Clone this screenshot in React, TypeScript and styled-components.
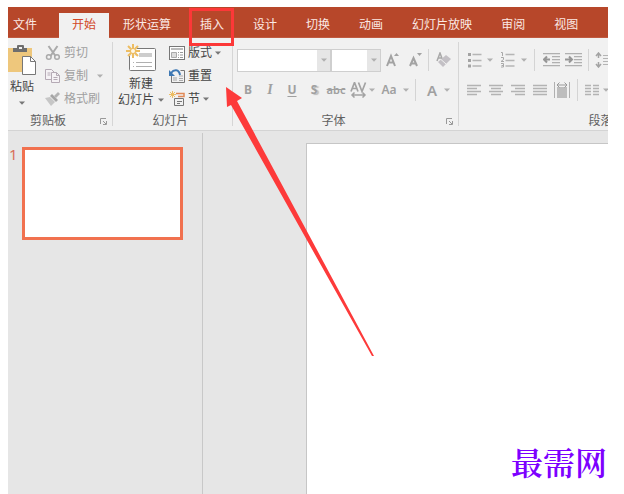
import React from "react";
import styled, { createGlobalStyle, css } from "styled-components";

const GlobalStyle = createGlobalStyle`
  * { box-sizing: border-box; }
  body { margin: 0; background: #fff; }
  body, button, select {
    font-family: "Noto Sans", "Noto Sans CJK SC", sans-serif;
    font-size: 12px;
    line-height: 16px;
  }
  button { border: 0; padding: 0; background: none; color: inherit; cursor: pointer; }
  svg { display: block; flex: none; }
`;

const Page = styled.main`
  min-height: 100vh;
  padding: 7px 16px 0 8px;
  display: flex;
  flex-direction: column;
`;

const AppWindow = styled.div`
  position: relative;
  flex: 1;
  display: flex;
  flex-direction: column;
  overflow: hidden;
  background: #e6e6e6;
`;

const TabBar = styled.nav`
  display: flex;
  align-items: flex-end;
  height: 31px;
  background: #b7472a;
  border-bottom: 1px solid #c05a40;
`;

const Tab = styled.button<{ $kind?: "file" | "active" }>`
  position: relative;
  flex: none;
  height: 24px;
  margin-right: 1px;
  padding: 0 14px;
  color: #fbe9e4;
  white-space: nowrap;
  ${(p) => p.$kind === "file" && css`margin: 0; padding: 0 22px 0 5px;`}
  ${(p) =>
    p.$kind === "active" &&
    css`
      height: 25px;
      margin: 0 0 -1px;
      padding: 0 13px 2px;
      background: #f1f1f1;
      color: #d24726;
    `}
`;

const Highlight = styled.span`
  position: absolute;
  z-index: 2;
  inset: -5px 4px -9px 3px;
  border: 3px solid #fc3838;
  pointer-events: none;
`;

const Ribbon = styled.div`
  display: flex;
  background: #f1f1f1;
  border-bottom: 1px solid #d4d4d4;
`;

const Group = styled.section<{ $width: number }>`
  flex: none;
  width: ${(p) => p.$width}px;
  display: flex;
  flex-direction: column;
  margin: 4px 0;
  border-right: 1px solid #d6d6d6;
`;

const GroupBody = styled.div`
  display: flex;
  height: 70px;
`;

const GroupLabel = styled.footer`
  display: flex;
  align-items: center;
  height: 18px;
  margin-bottom: -4px;
  padding-right: 4px;
  color: #606060;
`;

const LabelText = styled.span`
  flex: 1;
  text-align: center;
`;

const LauncherButton = styled.button`
  width: 20px;
  display: flex;
  justify-content: flex-end;
`;

const BigButton = styled.button<{ $width: number }>`
  flex: none;
  width: ${(p) => p.$width}px;
  display: flex;
  flex-direction: column;
  align-items: center;
  gap: 3px;
  padding-top: 2px;
  color: #444;
  white-space: nowrap;
`;

const BigText = styled.span`
  display: flex;
  flex-direction: column;
  align-items: center;
`;

const TextLine = styled.span`
  display: flex;
  align-items: center;
  justify-content: center;
  gap: 4px;
  height: 16px;
`;

const Stack = styled.div<{ $indent?: number }>`
  display: flex;
  flex-direction: column;
  margin-top: -1px;
  padding-left: ${(p) => p.$indent ?? 0}px;
`;

const SmallButton = styled.button<{ $muted?: boolean; $wide?: boolean }>`
  display: flex;
  align-items: center;
  gap: 3px;
  height: 23px;
  color: ${(p) => (p.$muted ? "#a0a0a0" : "#444")};
  svg + span + svg { margin-left: ${(p) => (p.$wide ? 6 : 0)}px; }
`;

const ToolRows = styled.div`
  display: flex;
  flex-direction: column;
  gap: 8px;
  padding: 7px 0 0 4px;
`;

const ToolRow = styled.div`
  display: flex;
  align-items: center;
  height: 22px;
`;

const Tool = styled.button<{ $width?: number; $size?: number }>`
  flex: none;
  width: ${(p) => p.$width ?? 22}px;
  height: 22px;
  display: flex;
  align-items: center;
  justify-content: center;
  color: #a0a0a0;
  font-size: ${(p) => p.$size ?? 12}px;
  font-weight: 700;
`;

const LightTool = styled(Tool)`
  font-weight: 600;
`;

const Italic = styled.i`
  font-family: "Liberation Serif", serif;
  font-size: 14px;
`;
const Underline = styled.u`
  text-underline-offset: 2px;
`;
const Shadowed = styled.span`
  text-shadow: 2px 1px 1px #bbb;
`;
const Strike = styled.s`
  font-size: 11px;
  font-weight: 600;
`;

const Divider = styled.span<{ $gap?: number }>`
  flex: none;
  width: 1px;
  height: 22px;
  margin: 0 ${(p) => p.$gap ?? 5}px;
  background: #d4d4d4;
`;

const Combo = styled.label<{ $width: number }>`
  display: flex;
  align-items: stretch;
  width: ${(p) => p.$width}px;
  height: 23px;
  border: 1px solid #cfcfcf;
  background: #fff;
`;

const ComboSelect = styled.select`
  flex: 1;
  min-width: 0;
  appearance: none;
  border: 0;
  background: #fff;
`;

const ComboArrow = styled.span`
  display: flex;
  align-items: center;
  justify-content: center;
  width: 13px;
  background: #e6e6e6;
`;

const Workspace = styled.div`
  flex: 1;
  display: flex;
`;

const ThumbPane = styled.aside`
  flex: none;
  width: 195px;
  display: flex;
  align-items: flex-start;
  margin-top: 2px;
  padding: 14px 0 0 1px;
  border-right: 1px solid #c8c8c8;
`;

const ThumbNumber = styled.span`
  width: 13px;
  color: #d9705a;
  font-family: "Noto Sans", sans-serif;
  font-size: 15px;
  line-height: 14px;
`;

const Thumb = styled.button`
  width: 161px;
  height: 93px;
  border: 3px solid #f1714f;
  background: #fff;
`;

const Canvas = styled.section`
  flex: 1;
  display: flex;
  padding: 12px 0 0 103px;
`;

const Slide = styled.div`
  flex: 1;
  display: flex;
  align-items: flex-end;
  justify-content: flex-end;
  padding: 0 1px 13px 0;
  border: solid #c6c6c6;
  border-width: 1px 0 0 1px;
  background: #fff;
`;

const Watermark = styled.span`
  color: #7d00ff;
  font-family: "Noto Serif CJK SC", "Noto Sans CJK SC", serif;
  font-size: 32px;
  font-weight: 600;
  line-height: 40px;
`;

const Pointer = styled.svg`
  position: absolute;
  left: 216px;
  top: 79px;
  z-index: 3;
  pointer-events: none;
`;

const Caret = ({ color = "#b0b0b0" }: { color?: string }) => (
  <svg width="6" height="4" viewBox="0 0 6 4"><path d="M0 .5h6L3 3.700z" fill={color} /></svg>
);

const Launcher = () => (
  <LauncherButton aria-label="More options">
    <svg width="9" height="9" viewBox="0 0 9 9" fill="none" stroke="#999">
      <path d="M1.500 7V1.500H7M4 4l3 3M7.500 4v3.500H4" />
    </svg>
  </LauncherButton>
);

const PasteIcon = () => (
  <svg width="28" height="32" viewBox="0 0 28 32">
    <path d="M0 4h24v24H0z" fill="#eec77c" />
    <path d="M5 8V4h4V2q0-1 1-1h5q1 0 1 1v2h3v4z" fill="#6e6e6e" />
    <path d="M11 3h3v2h-3z" fill="#f1f1f1" />
    <path d="M14.500 12.500h8l5 5v13h-13z" fill="#fff" stroke="#777" />
    <path d="M22.500 12.500v5h5" fill="none" stroke="#777" />
  </svg>
);

const CutIcon = () => (
  <svg width="16" height="16" viewBox="0 0 16 16" fill="none" stroke="#aaa" strokeWidth="2">
    <path d="M3.500 1l7 10M12.500 1L5.500 11" />
    <circle cx="3.800" cy="12" r="2.300" strokeWidth="1.500" />
    <circle cx="12" cy="12" r="2.300" strokeWidth="1.500" />
  </svg>
);

const CopyIcon = () => (
  <svg width="16" height="16" viewBox="0 0 16 16" fill="#f5f2f5" stroke="#b5aab5">
    <path d="M.5 1.500h6l3 3v7h-9zM2.500 5h3M2.500 7h3" />
    <path d="M6.500 4.500h5l3 3v7h-8zM11.500 4.500v3h3M8.500 9.500h4M8.500 11.500h4" />
  </svg>
);

const BrushIcon = () => (
  <svg width="16" height="16" viewBox="0 0 16 16">
    <path d="M0 7l5-1 5 5-4 4z" fill="#c6c6c6" />
    <path d="M5 5l2-2 6 6-2 2z" fill="#a5a5a5" />
    <path d="M9 5l4-4 2 2-4 4z" fill="#b3b3b3" />
  </svg>
);

const Spark = () => (
  <path d="M7 0v14M0 7h14M2 2l10 10M12 2L2 12" stroke="#edbd62" strokeWidth="2" fill="none" />
);

const NewSlideIcon = () => (
  <svg width="32" height="29" viewBox="0 0 32 29">
    <rect x="4.500" y="4.500" width="26" height="22" rx="1" fill="#fff" stroke="#787878" />
    <path d="M14 9h13v4H14z" fill="#cdcdcd" />
    <path d="M8 18.500h1M11 18.500h16M8 22.500h1M11 22.500h16" stroke="#b0b0b0" />
    <path d="M2 0h10v12H2z" fill="#f1f1f1" />
    <g transform="translate(1 0)">
      <Spark />
      <circle cx="7" cy="7" r="2" fill="#fff8e8" />
    </g>
  </svg>
);

const LayoutIcon = () => (
  <svg width="16" height="16" viewBox="0 0 16 16">
    <rect x=".5" y="1.500" width="15" height="13" fill="#fff" stroke="#777" />
    <path d="M2 3h12v2H2z" fill="#bbb" />
    <path d="M2.500 7.500h5v5h-5z" fill="#ddd" stroke="#aaa" />
    <path d="M9 7.500h1M11 7.500h3M9 10h1M11 10h3M9 12.500h1M11 12.500h3" stroke="#999" />
  </svg>
);

const ResetIcon = () => (
  <svg width="16" height="16" viewBox="0 0 16 16" fill="none">
    <path d="M2.500 7.500v7h13v-12h-4" stroke="#777" fill="none" />
    <path d="M4 9h4v4H4z" fill="#ccc" />
    <path d="M10 8h4M10 10.500h4M10 12.500h4" stroke="#aaa" />
    <path d="M2 5c3-4 8-4 9 2" stroke="#3f79b4" strokeWidth="2" />
    <path d="M0 2v6h6z" fill="#3f79b4" />
  </svg>
);

const SectionIcon = () => (
  <svg width="16" height="16" viewBox="0 0 16 16" fill="none">
    <path d="M7 2.500h8v3H9" stroke="#e18955" strokeWidth="1.500" />
    <path d="M5.500 7.500h9v7h-9zM8 10.500h5M8 12.500h3" stroke="#777" />
    <g transform="scale(.5)"><Spark /></g>
  </svg>
);

const SizeIcon = ({ up }: { up?: boolean }) => (
  <svg width="15" height="16" viewBox="0 0 15 16">
    {up ? (
      <path d="M1 14L5 4l4 10M2.500 10.500h5" fill="none" stroke="#a3a3a3" strokeWidth="2" />
    ) : (
      <path d="M2 14l3.500-8L9 14M3.500 11.500h4" fill="none" stroke="#a3a3a3" strokeWidth="2" />
    )}
    <path d={up ? "M8 4h5l-2.500-3z" : "M9 1h5l-2.500 3z"} fill="#a3a3a3" />
  </svg>
);

const ClearIcon = () => (
  <svg width="16" height="16" viewBox="0 0 16 16">
    <path d="M1 9l3-8 3 8M2 6h4" fill="none" stroke="#a8a8a8" strokeWidth="1.500" />
    <path d="M2 10l8-7 5 4-8 8z" fill="#c3c0c5" />
    <path d="M5 7.500l5 4.500" stroke="#f1f1f1" fill="none" />
  </svg>
);

const SpacingIcon = () => (
  <svg width="17" height="16" viewBox="0 0 17 16" fill="none" stroke="#a3a3a3">
    <path d="M1 9.500L4.500.5 8 9.500M2.200 6.500h4.600M8.500 .5L12 9.500 15.500.5" strokeWidth="1.700" />
    <path d="M2 13h13M4.500 10.500L2 13l2.500 2.500M12.500 10.500L15 13l-2.500 2.500" strokeWidth="1.500" />
  </svg>
);

const ListIcon = ({ numbered }: { numbered?: boolean }) => (
  <svg width="15" height="16" viewBox="0 0 15 16" fill="none" stroke="#b5b5b5">
    {numbered ? (
      <path d="M1 .5h1.500V4M1 5.500h2.500v2L1 9.500h3M1 11.500h2.500v3.500H1M1.500 13.500h2" stroke="#a8a8a8" />
    ) : (
      <path d="M1 2.500h3M1 8.500h3M1 14h3" stroke="#a3a3a3" strokeWidth="3" />
    )}
    <path d="M5.500 2.500h9M5.500 8.500h9M5.500 14h9" strokeWidth="1.500" />
  </svg>
);

const IndentIcon = ({ out }: { out?: boolean }) => (
  <svg width="17" height="14" viewBox="0 0 17 14" fill="none" stroke="#b0b0b0" strokeWidth="1.300">
    <path d="M0 .7h17M9 3.700h8M9 6.700h8M9 9.700h8M0 12.700h17" />
    <path d={out ? "M1 6.500h6M4 3.500l-3 3 3 3" : "M0 6.500h6M4 3.500l3 3-3 3"} stroke="#969696" strokeWidth="2" />
  </svg>
);

const LineSpacingIcon = () => (
  <svg width="18" height="16" viewBox="0 0 18 16" fill="none" stroke="#a3a3a3">
    <path d="M3.500 1v5M1 4l2.500-3L6 4M3.500 10v5M1 12l2.500 3L6 12" strokeWidth="1.500" />
    <path d="M8 3.500h10M8 6.500h10M8 9.500h10M8 12.500h10" stroke="#b5b5b5" />
  </svg>
);

const alignPaths = {
  left: "M0 1.500h14M0 4.500h10M0 7.500h14M0 10.500h10",
  center: "M0 1.500h14M2 4.500h10M0 7.500h14M2 10.500h10",
  right: "M0 1.500h14M4 4.500h10M0 7.500h14M4 10.500h10",
  justify: "M0 1.500h14M0 4.500h14M0 7.500h14M0 10.500h14",
  columns: "M0 1.500h6M8 1.500h6M0 4.500h6M8 4.500h6M0 7.500h6M8 7.500h6M0 10.500h6M8 10.500h6",
};

const AlignIcon = ({ kind }: { kind: keyof typeof alignPaths }) => (
  <svg width="14" height="12" viewBox="0 0 14 12"><path d={alignPaths[kind]} stroke="#b3b3b3" strokeWidth="1.500" /></svg>
);

const DistributeIcon = () => (
  <svg width="16" height="17" viewBox="0 0 16 17" fill="none">
    <path d="M3 5h10v11H3z" fill="#bdbdbd" />
    <path d="M.5 0v16M15.500 0v16" stroke="#b0b0b0" />
    <path d="M3 3h10M5.500 .5L3 3l2.500 2.500M10.500 .5L13 3l-2.500 2.500" stroke="#999" />
  </svg>
);

const BulbIcon = () => (
  <svg width="10" height="14" viewBox="0 0 10 14" fill="none" stroke="#f0c8bc">
    <path d="M3.500 10V8C1 6.500 1 1 5 1s4 5.500 1.500 7v2zM3.500 12.500h3" />
  </svg>
);

export default function App() {
  return (
    <Page>
      <GlobalStyle />
      <AppWindow>
        <TabBar>
          <Tab $kind="file">文件</Tab>
          <Tab $kind="active">开始</Tab>
          <Tab>形状运算</Tab>
          <Tab>插入<Highlight /></Tab>
          <Tab>设计</Tab>
          <Tab>切换</Tab>
          <Tab>动画</Tab>
          <Tab>幻灯片放映</Tab>
          <Tab>审阅</Tab>
          <Tab>视图</Tab>
          <Tab aria-label="Help"><BulbIcon /></Tab>
        </TabBar>

        <Ribbon>
          <Group $width={105}>
            <GroupBody>
              <BigButton $width={28}>
                <PasteIcon />
                <BigText>
                  <TextLine>粘贴</TextLine>
                  <TextLine><Caret color="#777" /></TextLine>
                </BigText>
              </BigButton>
              <Stack $indent={9}>
                <SmallButton $muted><CutIcon /><span>剪切</span></SmallButton>
                <SmallButton $muted $wide><CopyIcon /><span>复制</span><Caret /></SmallButton>
                <SmallButton $muted><BrushIcon /><span>格式刷</span></SmallButton>
              </Stack>
            </GroupBody>
            <GroupLabel>
              <LabelText>剪贴板</LabelText>
              <Launcher />
            </GroupLabel>
          </Group>

          <Group $width={120}>
            <GroupBody>
              <BigButton $width={56}>
                <NewSlideIcon />
                <BigText>
                  <TextLine>新建</TextLine>
                  <TextLine>幻灯片<Caret color="#777" /></TextLine>
                </BigText>
              </BigButton>
              <Stack>
                <SmallButton><LayoutIcon /><span>版式</span><Caret color="#777" /></SmallButton>
                <SmallButton><ResetIcon /><span>重置</span></SmallButton>
                <SmallButton><SectionIcon /><span>节</span><Caret color="#777" /></SmallButton>
              </Stack>
            </GroupBody>
            <GroupLabel><LabelText>幻灯片</LabelText></GroupLabel>
          </Group>

          <Group $width={226}>
            <GroupBody>
              <ToolRows>
                <ToolRow>
                  <Combo $width={94}>
                    <ComboSelect aria-label="Font" />
                    <ComboArrow><Caret /></ComboArrow>
                  </Combo>
                  <Combo $width={50}>
                    <ComboSelect aria-label="Font size" />
                    <ComboArrow><Caret /></ComboArrow>
                  </Combo>
                  <Tool $width={24} aria-label="Increase font size"><SizeIcon up /></Tool>
                  <Tool $width={20} aria-label="Decrease font size"><SizeIcon /></Tool>
                  <Divider $gap={3} />
                  <Tool $width={24} aria-label="Clear formatting"><ClearIcon /></Tool>
                </ToolRow>
                <ToolRow>
                  <Tool aria-label="Bold">B</Tool>
                  <Tool aria-label="Italic"><Italic>I</Italic></Tool>
                  <Tool aria-label="Underline"><Underline>U</Underline></Tool>
                  <Tool aria-label="Shadow"><Shadowed>S</Shadowed></Tool>
                  <Tool aria-label="Strikethrough"><Strike>abc</Strike></Tool>
                  <Tool aria-label="Character spacing"><SpacingIcon /></Tool>
                  <Tool $width={6} aria-label="Spacing options"><Caret /></Tool>
                  <LightTool $width={28} aria-label="Change case">Aa</LightTool>
                  <Tool $width={6} aria-label="Case options"><Caret /></Tool>
                  <Divider $gap={6} />
                  <LightTool $width={20} $size={15} aria-label="Font color">A</LightTool>
                  <Tool $width={10} aria-label="Color options"><Caret /></Tool>
                </ToolRow>
              </ToolRows>
            </GroupBody>
            <GroupLabel>
              <LabelText>字体</LabelText>
              <Launcher />
            </GroupLabel>
          </Group>

          <Group $width={308}>
            <GroupBody>
              <ToolRows>
                <ToolRow>
                  <Tool aria-label="Bullets"><ListIcon /></Tool>
                  <Tool $width={10} aria-label="Bullet options"><Caret /></Tool>
                  <Tool $width={24} aria-label="Numbering"><ListIcon numbered /></Tool>
                  <Tool $width={10} aria-label="Numbering options"><Caret /></Tool>
                  <Divider />
                  <Tool aria-label="Decrease indent"><IndentIcon out /></Tool>
                  <Tool aria-label="Increase indent"><IndentIcon /></Tool>
                  <Divider $gap={4} />
                  <Tool aria-label="Line spacing"><LineSpacingIcon /></Tool>
                </ToolRow>
                <ToolRow>
                  <Tool aria-label="Align left"><AlignIcon kind="left" /></Tool>
                  <Tool aria-label="Center"><AlignIcon kind="center" /></Tool>
                  <Tool aria-label="Align right"><AlignIcon kind="right" /></Tool>
                  <Tool aria-label="Justify"><AlignIcon kind="justify" /></Tool>
                  <Tool aria-label="Distribute"><DistributeIcon /></Tool>
                  <Divider $gap={4} />
                  <Tool $width={20} aria-label="Columns"><AlignIcon kind="columns" /></Tool>
                  <Tool $width={8} aria-label="Column options"><Caret /></Tool>
                </ToolRow>
              </ToolRows>
            </GroupBody>
            <GroupLabel>
              <LabelText>段落</LabelText>
              <Launcher />
            </GroupLabel>
          </Group>
        </Ribbon>

        <Workspace>
          <ThumbPane>
            <ThumbNumber>1</ThumbNumber>
            <Thumb aria-label="Slide 1" />
          </ThumbPane>
          <Canvas>
            <Slide><Watermark>最需网</Watermark></Slide>
          </Canvas>
        </Workspace>

        <Pointer width="152" height="272" viewBox="0 0 152 272">
          <path d="M2 1L18 12L13 15L150 270L148 270L7 19L3 21Z" fill="#fd3a3a" />
        </Pointer>
      </AppWindow>
    </Page>
  );
}
